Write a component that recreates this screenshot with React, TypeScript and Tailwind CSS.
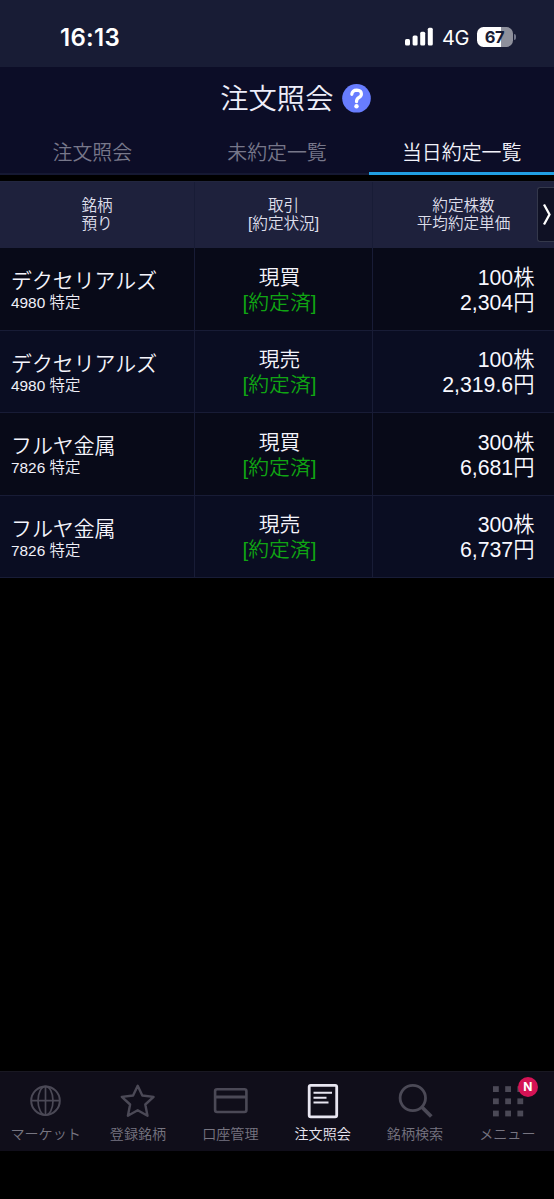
import type { ReactNode } from 'react'

const trades = [
  { name: 'デクセリアルズ', code: '4980 特定', side: '現買', qty: '100株', price: '2,304円' },
  { name: 'デクセリアルズ', code: '4980 特定', side: '現売', qty: '100株', price: '2,319.6円' },
  { name: 'フルヤ金属', code: '7826 特定', side: '現買', qty: '300株', price: '6,681円' },
  { name: 'フルヤ金属', code: '7826 特定', side: '現売', qty: '300株', price: '6,737円' },
]

function StatusBar() {
  return (
    <div className="flex h-[67px] shrink-0 items-start bg-[#181c35] pt-[20px] text-white">
      <div className="w-[344px] pl-[60px] font-['Inter','Noto_Sans_CJK_JP',sans-serif] text-[24px] leading-[35px] font-semibold tracking-[0.3px]">
        16:13
      </div>
      <svg className="mt-[7px] ml-[61px]" width="28" height="20" viewBox="0 0 28 20" fill="#fff">
        <rect x="0" y="12" width="5" height="6.500" rx="1.500" />
        <rect x="7.600" y="8.500" width="5" height="10" rx="1.500" />
        <rect x="15.200" y="4.700" width="5" height="13.800" rx="1.500" />
        <rect x="22.800" y="0.800" width="5" height="17.700" rx="1.500" />
      </svg>
      <div className="ml-[9px] w-[27px] font-['Inter',sans-serif] text-[20px] leading-[36px] tracking-[-0.3px] whitespace-nowrap">4G</div>
      <div className="mt-[7px] ml-[8px] flex items-center">
        <div className="flex h-[20px] w-[36px] items-center justify-center rounded-[6.500px] bg-[linear-gradient(90deg,#fff_67%,#8e909c_67%)] pr-[1px] font-['Inter',sans-serif] text-[16.500px] leading-[20px] font-bold tracking-[-0.3px] text-[#181c35]">
          67
        </div>
        <div className="ml-[1px] h-[6px] w-[2px] rounded-r-full bg-[#73768a]" />
      </div>
    </div>
  )
}

function Header() {
  return (
    <header className="flex h-[108px] shrink-0 flex-col bg-[#0c0d27]">
      <div className="flex h-[62px] items-center justify-center pl-[37px]">
        <h1 className="w-[121.500px] pt-[1px] text-[28.300px] leading-[40px] font-[350] whitespace-nowrap text-[#eeeefa]">注文照会</h1>
        <svg width="29" height="29" viewBox="0 0 29 29">
          <circle cx="14.500" cy="14.300" r="14.300" fill="#687dff" />
          <path d="M9.800 10.300Q10.300 6.100 14.800 6.100Q19.400 6.300 19.400 9.900Q19.400 12.100 16.900 13.500Q14.600 14.700 14.500 17.600" fill="none" stroke="#fff" strokeWidth="3.200" strokeLinecap="round" />
          <circle cx="14.500" cy="22.300" r="2.200" fill="#fff" />
        </svg>
      </div>
      <nav className="grid h-[46px] grid-cols-3 text-center text-[19.900px] leading-[48px] font-[350] text-[#77778a]">
        <div className="h-[46px] border-b-2 border-[#151832]">注文照会</div>
        <div className="h-[46px] border-b-2 border-[#151832]">未約定一覧</div>
        <div className="h-[46px] border-b-3 border-[#219fe2] text-[#f2f2fa]">当日約定一覧</div>
      </nav>
    </header>
  )
}

function TableHeader() {
  return (
    <div className="relative grid h-[67px] shrink-0 grid-cols-[195px_178px_181px] border-t border-[#22263f] bg-[#1e213c] text-[15.600px] leading-[18.500px] font-[350] text-[#dedfeb]">
      <div className="flex items-center justify-center border-r border-[#181c36]">
        <div>銘柄<br />預り</div>
      </div>
      <div className="flex items-center justify-center border-r border-[#181c36] text-center">
        <div>取引<br />[約定状況]</div>
      </div>
      <div className="flex items-center justify-center text-center">
        <div>約定株数<br />平均約定単価</div>
      </div>
      <button className="absolute top-[5px] right-0 flex h-[55px] w-[17px] items-center justify-end rounded-l-[3px] border border-r-0 border-[#34384b] bg-[#0f1124]">
        <svg width="12" height="24" viewBox="0 0 12 24" fill="none" stroke="#fff" strokeWidth="2.300">
          <path d="M2 1.500L7.500 11.500L2 21.500" />
        </svg>
      </button>
    </div>
  )
}

function TradeTable() {
  return (
    <div className="flex h-[330px] shrink-0 flex-col">
      {trades.map((t, i) => (
        <div
          key={i}
          className="grid h-[82.500px] grid-cols-[195px_178px_181px] border-b border-[#181c36] font-[350] odd:bg-[#080a18] even:bg-[#0a0d22]"
        >
          <div className="flex flex-col justify-center border-r border-[#181c36] pt-[4px] pl-[11px]">
            <div className="text-[20.900px] leading-[25px] text-[#f5f5fc]">{t.name}</div>
            <div className="text-[15.400px] leading-[20px] text-[#f0f0f8]">{t.code}</div>
          </div>
          <div className="flex flex-col justify-center border-r border-[#181c36] pt-[2px] pr-[8px] text-center text-[20.800px] leading-[25px]">
            <div className="text-[#f5f5fc]">{t.side}</div>
            <div className="text-[#10a513]">[約定済]</div>
          </div>
          <div className="flex flex-col justify-center pt-[4px] pr-[19.500px] text-right text-[21.300px] leading-[25px] text-[#f8f8ff]">
            <div>{t.qty}</div>
            <div>{t.price}</div>
          </div>
        </div>
      ))}
    </div>
  )
}

function NavItem({ label, active, children }: { label: string; active?: boolean; children: ReactNode }) {
  return (
    <div className={active ? 'flex flex-col items-center text-[#e8e6f1]' : 'flex flex-col items-center text-[#777581]'}>
      <div className={active ? 'relative h-[52px]' : 'relative h-[52px] text-[#4b4956]'}>
        <svg width="60" height="52" viewBox="0 0 60 52" fill="none" stroke="currentColor" strokeWidth="2">
          {children}
        </svg>
        {label === 'メニュー' && (
          <div className="absolute top-[5px] left-[40px] flex h-[20px] w-[20px] items-center justify-center rounded-full bg-[#d51355] font-['Inter',sans-serif] text-[12px] font-bold text-white">
            N
          </div>
        )}
      </div>
      <div className="pr-[1px] text-[14.100px] leading-[20px] font-[350] whitespace-nowrap">{label}</div>
    </div>
  )
}

function BottomNav() {
  return (
    <nav className="mt-auto mb-[48px] grid h-[80px] shrink-0 grid-cols-6 border-t border-[#191822] bg-[#100e1a]">
      <NavItem label="マーケット">
        <circle cx="29.500" cy="28.700" r="14.300" />
        <ellipse cx="29.500" cy="28.700" rx="7.500" ry="14.300" strokeWidth="1.700" />
        <path d="M29.500 14.500V43M15.500 28.700H43.500" strokeWidth="1.700" />
      </NavItem>
      <NavItem label="登録銘柄">
        <path d="M29.700 13.800L34.300 23.500L45.600 24.900L37.300 32.500L39.500 43.700L29.700 38.300L19.900 43.700L22.100 32.500L13.800 24.900L25.100 23.500Z" strokeWidth="2.400" strokeLinejoin="round" />
      </NavItem>
      <NavItem label="口座管理">
        <rect x="14.100" y="17.200" width="31.300" height="22.800" rx="2" strokeWidth="2.600" />
        <path d="M14 25H45.400" strokeWidth="3" />
      </NavItem>
      <NavItem label="注文照会" active>
        <rect x="16.200" y="13.300" width="27.500" height="31.500" rx="1.500" strokeWidth="2.800" />
        <path d="M20.500 20.800H39M20.500 25.700H33.500M20.500 30.500H35.500" />
      </NavItem>
      <NavItem label="銘柄検索">
        <circle cx="27.800" cy="26" r="12.700" strokeWidth="2.800" />
        <path d="M36.800 35L46.300 44.500" strokeWidth="3.800" />
      </NavItem>
      <NavItem label="メニュー">
        <g fill="currentColor" stroke="none">
          {[14.2, 26.4, 38.6].map((y) =>
            [15, 27.2, 39.4].map((x) => <rect key={x + '-' + y} x={x} y={y} width="5.800" height="5.800" />),
          )}
        </g>
      </NavItem>
    </nav>
  )
}

export default function App() {
  return (
    <div className="flex h-[1199px] w-[554px] flex-col overflow-hidden bg-black font-['Liberation_Sans','Noto_Sans_CJK_JP',sans-serif]" lang="ja">
      <StatusBar />
      <Header />
      <div className="h-[6px] shrink-0" />
      <TableHeader />
      <TradeTable />
      <BottomNav />
    </div>
  )
}
